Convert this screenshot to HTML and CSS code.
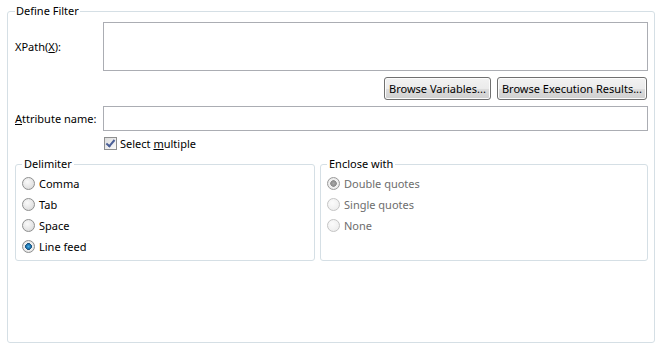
FILE: index.html
```html
<!DOCTYPE html>
<html lang="en">
<head>
    <meta charset="UTF-8">
    <title>Define Filter</title>
    <link rel="stylesheet" href="styles.css">
</head>
<body>
    <fieldset class="group main">
        <legend>Define Filter</legend>

        <div class="form">
            <label class="label">XPath(<u>X</u>):</label>
            <div class="textarea"></div>

            <div class="buttons">
                <button class="btn">Browse Variables...</button>
                <button class="btn">Browse Execution Results...</button>
            </div>

            <label class="label"><u>A</u>ttribute name:</label>
            <div class="input"></div>

            <div class="check-row">
                <span class="checkbox checked"></span>
                <span>Select <u>m</u>ultiple</span>
            </div>
        </div>

        <div class="options">
            <fieldset class="group sub">
                <legend>Delimiter</legend>
                <div class="radio-row"><span class="radio"></span>Comma</div>
                <div class="radio-row"><span class="radio"></span>Tab</div>
                <div class="radio-row"><span class="radio"></span>Space</div>
                <div class="radio-row"><span class="radio selected"></span>Line feed</div>
            </fieldset>

            <fieldset class="group sub disabled">
                <legend>Enclose with</legend>
                <div class="radio-row"><span class="radio selected"></span>Double quotes</div>
                <div class="radio-row"><span class="radio"></span>Single quotes</div>
                <div class="radio-row"><span class="radio"></span>None</div>
            </fieldset>
        </div>
    </fieldset>
</body>
</html>
```

FILE: styles.css
```css
body {
    margin: 0;
    background-color: #ffffff;
    font-family: 'Noto Sans', 'Liberation Sans', sans-serif;
    font-size: 11px;
    color: #000000;
}

.group {
    border: 1px solid #d5dfe5;
    border-radius: 3px;
    margin: 0;
    box-sizing: border-box;
}

.group legend {
    line-height: 14px;
    padding: 0 1px;
}

.main {
    margin: 4px 8px 0 7px;
    height: 339px;
    padding: 4px 6px 0 7px;
}

/* top part: labels on the left, fields on the right */
.form {
    display: grid;
    grid-template-columns: 88px 1fr;
    align-items: center;
}

.label {
    line-height: 15px;
    white-space: nowrap;
}

.textarea,
.input {
    border: 1px solid #abadb3;
    background-color: #ffffff;
    box-sizing: border-box;
}

.textarea {
    height: 49px;
}

.input {
    height: 25px;
}

.buttons {
    grid-column: 1 / 3;
    display: flex;
    justify-content: flex-end;
    gap: 6px;
    margin: 6px 1px 6px 0;
}

.btn {
    font-family: inherit;
    font-size: 11px;
    color: #000000;
    height: 23px;
    padding: 0 4px;
    border: 1px solid #707070;
    border-radius: 3px;
    background: linear-gradient(#f2f2f2 0%, #ebebeb 50%, #dddddd 51%, #cfcfcf 100%);
    box-shadow: inset 0 0 0 1px #fcfcfc;
}

.check-row {
    grid-column: 2;
    display: flex;
    align-items: center;
    gap: 3px;
    height: 15px;
    margin-top: 5px;
    padding-left: 1px;
}

.checkbox {
    width: 13px;
    height: 13px;
    box-sizing: border-box;
    border: 1px solid #8e8f8f;
    background: linear-gradient(135deg, #dcdcdc, #fbfbfb);
    position: relative;
}

.checkbox.checked::after {
    content: '';
    position: absolute;
    left: 3px;
    top: 0px;
    width: 3px;
    height: 7px;
    border: solid #4a5f97;
    border-width: 0 2px 2px 0;
    transform: rotate(40deg);
}

/* two option groups side by side */
.options {
    display: grid;
    grid-template-columns: 300px 1fr;
    gap: 5px;
    margin-top: 6px;
}

.sub {
    height: 104px;
    padding: 2px 6px 0 6px;
}

.sub legend {
    padding: 0 2px;
}

.radio-row {
    display: flex;
    align-items: center;
    gap: 4px;
    height: 21px;
}

.radio {
    width: 13px;
    height: 13px;
    box-sizing: border-box;
    border-radius: 50%;
    border: 1px solid #8e8f8f;
    background: radial-gradient(circle at 40% 35%, #fafafa 0%, #e4e4e4 60%, #cfcfcf 100%);
}

.radio.selected {
    background: radial-gradient(circle, #49b0e8 0%, #1c6ea8 30%, #174d79 40%, #f0f0f0 46%, #d8d8d8 100%);
}

.disabled .radio-row {
    color: #6d6d6d;
}

.disabled .radio {
    border-color: #c4c4c4;
    background: radial-gradient(circle at 40% 35%, #fbfbfb 0%, #efefef 70%, #e6e6e6 100%);
}

.disabled .radio.selected {
    border-color: #9a9a9a;
    background: radial-gradient(circle, #a8a8a8 0%, #8a8a8a 38%, #f2f2f2 46%, #dedede 100%);
}
```
